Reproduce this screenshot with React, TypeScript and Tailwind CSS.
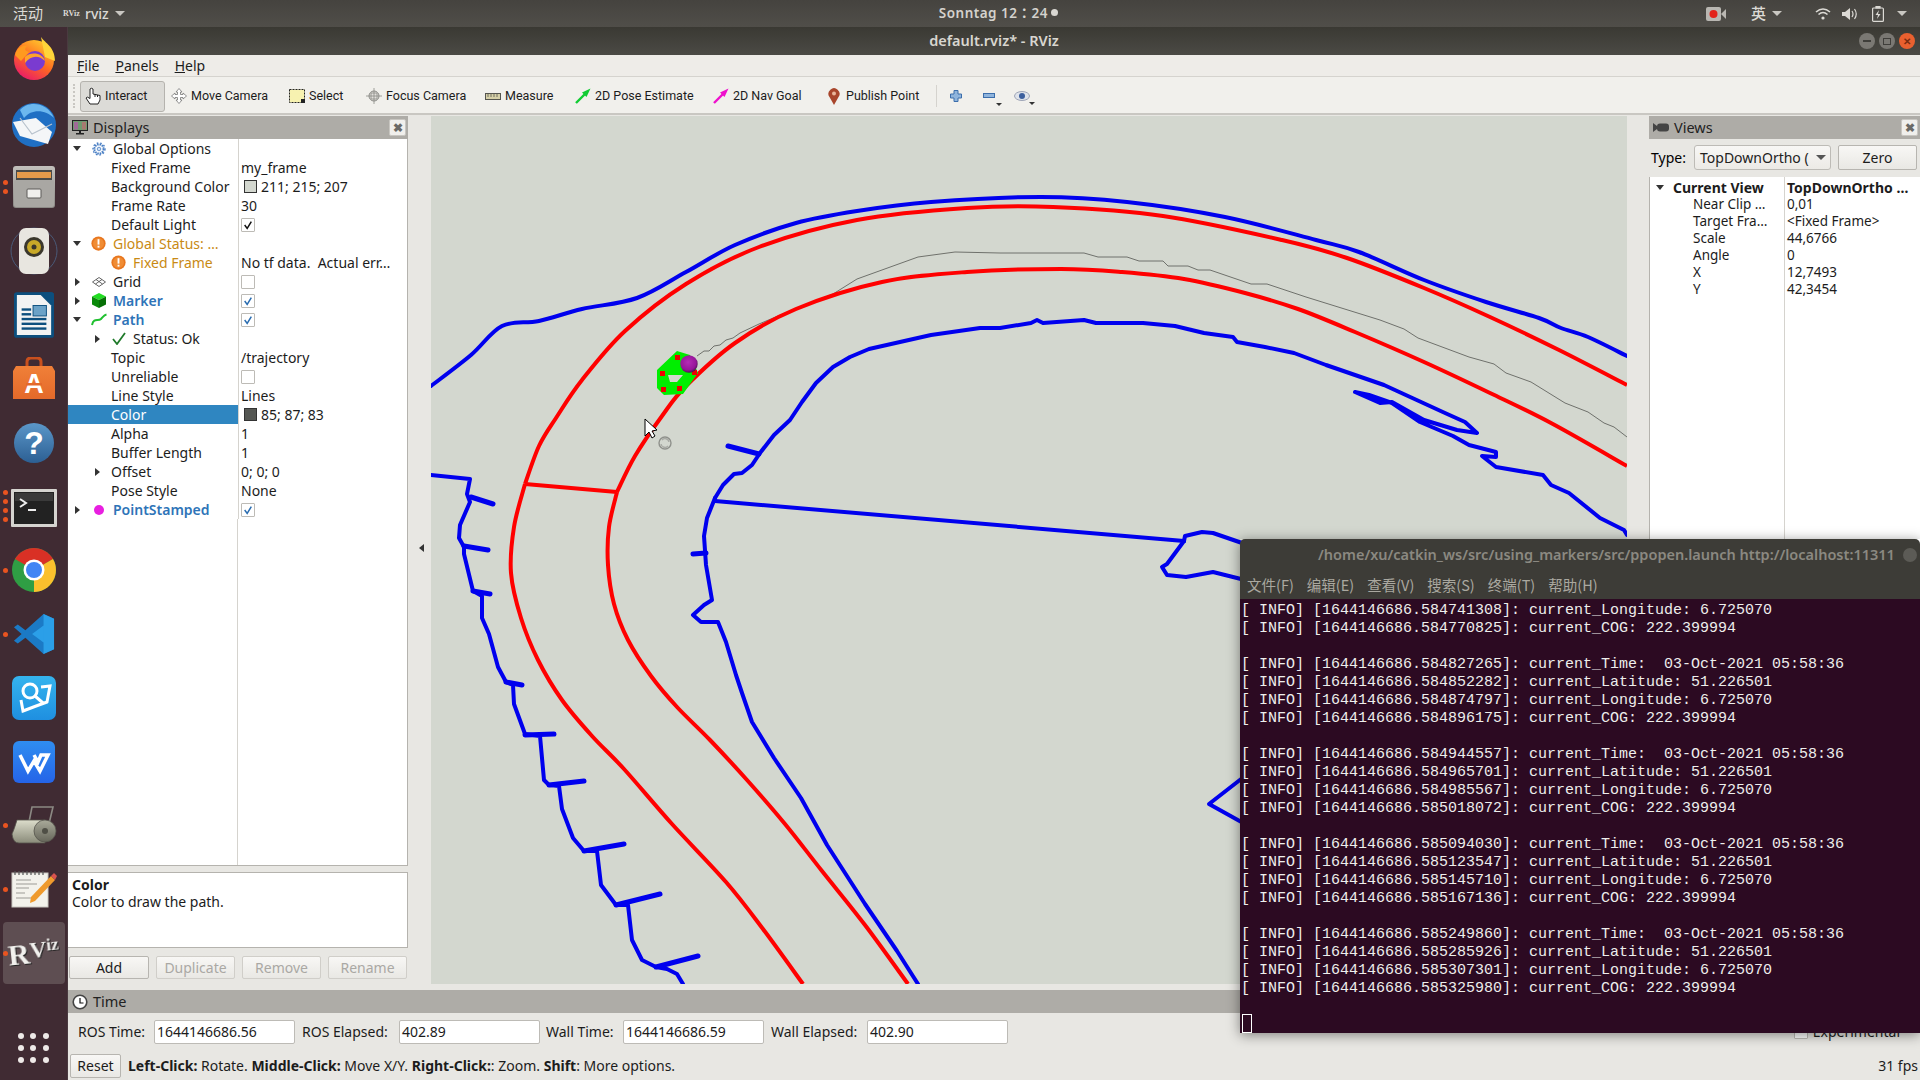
import type { ReactNode } from 'react';

const BLUE = '#0000ee';
const RED = '#ff0000';

type Pt = [number, number];

// catmull-rom to bezier, keeps the long lane curves from looking faceted
function smooth(pts: Pt[]) {
  let d = `M${pts[0][0]} ${pts[0][1]}`;
  for (let i = 0; i < pts.length - 1; i++) {
    const p0 = pts[Math.max(i - 1, 0)];
    const p1 = pts[i];
    const p2 = pts[i + 1];
    const p3 = pts[Math.min(i + 2, pts.length - 1)];
    const c1x = p1[0] + (p2[0] - p0[0]) / 6;
    const c1y = p1[1] + (p2[1] - p0[1]) / 6;
    const c2x = p2[0] - (p3[0] - p1[0]) / 6;
    const c2y = p2[1] - (p3[1] - p1[1]) / 6;
    d += ` C${c1x} ${c1y} ${c2x} ${c2y} ${p2[0]} ${p2[1]}`;
  }
  return d;
}

const redOuter: Pt[] = [[525, 484], [539, 446], [556, 418], [582, 380], [625, 331], [686, 284], [759, 247], [857, 220], [967, 208], [1053, 207], [1163, 216], [1282, 240], [1347, 258], [1424, 288], [1490, 317], [1559, 350], [1627, 385]];
const redOuterDown: Pt[] = [[525, 484], [514, 527], [511, 573], [521, 618], [538, 660], [562, 700], [592, 736], [624, 769], [672, 824], [726, 882], [763, 929], [803, 984]];
const redInner: Pt[] = [[617, 492], [635, 456], [662, 416], [686, 386], [735, 343], [796, 309], [882, 282], [967, 272], [1061, 269], [1122, 272], [1184, 279], [1245, 293], [1298, 309], [1355, 332], [1424, 362], [1490, 393], [1551, 423], [1627, 466]];
const redInnerDown: Pt[] = [[617, 492], [609, 527], [608, 565], [614, 604], [628, 640], [651, 676], [677, 707], [710, 740], [747, 780], [785, 824], [822, 871], [865, 925], [908, 984]];
const blueOuter: Pt[] = [[431, 386], [471, 355], [502, 326], [539, 321], [582, 309], [637, 298], [686, 272], [735, 245], [796, 223], [857, 211], [931, 202], [1041, 197], [1127, 202], [1225, 217], [1316, 240], [1359, 252], [1424, 280], [1486, 302], [1539, 318], [1561, 328], [1588, 337], [1627, 356]];
const blueInner = '715,498 723,485 734,474 742,473 752,465 760,453 774,435 790,420 802,402 816,383 833,367 850,357 869,349 900,342 931,335 980,328 1000,328 1031,323 1037,320 1043,323 1084,320 1096,323 1143,323 1175,326 1204,333 1233,337 1237,342 1265,347 1294,353 1326,365 1384,385 1445,413 1465,422 1477,433 1457,430 1424,420 1392,402 1380,403 1355,392 1369,395 1392,403 1420,422 1453,436 1469,445 1496,452 1496,457 1482,456 1496,467 1543,475 1551,485 1569,493 1600,518 1624,530 1627,535';
const blueDown = '715,498 707,518 704,536 706,565 712,600 704,605 693,615 701,622 718,622 726,642 736,675 742,693 752,722 774,758 801,798 827,845 865,904 897,951 918,984';
const blueLeft = '431,475 470,479 467,494 470,502 460,525 459,538 464,547 464,554 473,591 482,596 482,618 489,634 498,667 506,682 513,685 514,704 525,734 540,736 544,780 549,785 559,786 562,809 573,838 584,851 597,851 601,885 616,905 628,905 632,940 642,960 656,967 667,969 677,974 683,984';
const spurs: [number, number, number, number][] = [[471, 497, 493, 504], [464, 546, 488, 550], [473, 591, 490, 594], [506, 682, 522, 685], [525, 735, 554, 734], [549, 785, 584, 781], [584, 851, 624, 844], [616, 905, 660, 894], [656, 967, 698, 956], [728, 446, 759, 454], [693, 554, 706, 553]];
const trajectory = '697,356 704,351 709,351 714,346 720,345 726,340 733,338 740,333 759,324 797,308 833,294 857,279 918,257 955,252 1000,253 1084,253 1098,257 1127,257 1139,261 1163,261 1168,266 1188,266 1198,270 1210,270 1251,284 1267,284 1306,297 1380,320 1404,329 1418,338 1469,357 1494,364 1506,373 1531,382 1565,403 1588,412 1604,423 1614,427 1627,437';

function MapView() {
  return (
    <svg viewBox="431 116 1196 868" className="w-full h-full block">
      <polyline points={trajectory} fill="none" stroke="#6f716c" strokeWidth="1" />
      <g fill="none" stroke={RED} strokeWidth="4" strokeLinejoin="round">
        <path d={smooth(redOuter)} />
        <path d={smooth(redOuterDown)} />
        <path d={smooth(redInner)} />
        <path d={smooth(redInnerDown)} />
        <path d="M525 484 L617 492" />
      </g>
      <g fill="none" stroke={BLUE} strokeWidth="4" strokeLinejoin="round" strokeLinecap="round">
        <path d={smooth(blueOuter)} />
        <polyline points={blueInner} />
        <polyline points={blueDown} />
        <polyline points={blueLeft} />
        <path d="M715 501 L1184 541" />
        <polyline points="1184,541 1185,536 1202,532 1213,533 1245,544" />
        <polyline points="1184,541 1167,564 1162,567 1167,575 1186,577 1213,572 1245,580" />
        <polyline points="1245,776 1209,804 1245,824" />
        {spurs.map((s, i) => (
          <line key={i} x1={s[0]} y1={s[1]} x2={s[2]} y2={s[3]} strokeWidth="5" />
        ))}
      </g>
      <path fill="#00ee00" fillRule="evenodd" d="M677 351 L657 370 L657 388 L664 395 L683 394 L698 373 L690 355 Z M668 375 L683 375 L677 382 L670 382 Z" />
      <g fill="#ee0000">
        <rect x="675" y="355" width="5" height="5" />
        <rect x="660" y="371" width="5" height="5" />
        <rect x="661" y="387" width="5" height="5" />
        <rect x="677" y="386" width="5" height="5" />
        <rect x="692" y="370" width="5" height="5" />
      </g>
      <defs>
        <radialGradient id="ball" cx="0.45" cy="0.4" r="0.6">
          <stop offset="0" stopColor="#b52cb5" />
          <stop offset="0.75" stopColor="#96169a" />
          <stop offset="1" stopColor="#4e164f" />
        </radialGradient>
      </defs>
      <circle cx="689" cy="364" r="8.7" fill="url(#ball)" />
      <path d="M645 419 L645 436 L649 432 L652 438 L655 436 L652 431 L657 430 Z" fill="#fff" stroke="#000" strokeWidth="1" />
      <g fill="none" stroke="#8f918c" strokeWidth="1.4">
        <circle cx="665" cy="443" r="6" />
        <path d="M662 440 A4 4 0 0 1 669 442 M668 446 A4 4 0 0 1 661 444" stroke="#a8aaa5" />
      </g>
    </svg>
  );
}

function Grad({ id, from, to }: { id: string; from: string; to: string }) {
  return (
    <linearGradient id={id} x1="0" y1="0" x2="0" y2="1">
      <stop offset="0" stopColor={from} />
      <stop offset="1" stopColor={to} />
    </linearGradient>
  );
}

const dockIcons: { dots: number; icon: ReactNode; active?: boolean }[] = [
  {
    dots: 0,
    icon: (
      <svg viewBox="0 0 46 46" className="w-[46px] h-[46px] -mt-[4px]">
        <defs>
          <linearGradient id="ff" x1="0.8" y1="0" x2="0.2" y2="1">
            <stop offset="0" stopColor="#ffcf2f" />
            <stop offset="0.5" stopColor="#ff6b1f" />
            <stop offset="1" stopColor="#e8146f" />
          </linearGradient>
        </defs>
        <circle cx="23" cy="25" r="20" fill="url(#ff)" />
        <path d="M30 2 C34 8 44 12 44 26 L34 22 Z" fill="#ffd53a" />
        <path d="M4 20 C6 12 12 10 16 11 C13 14 14 16 18 17 L10 26 Z" fill="#ff9a1f" />
        <circle cx="24" cy="26" r="10" fill="#7a3bd0" />
        <path d="M14 22 C20 16 32 18 34 26 C28 20 20 20 14 28 Z" fill="#ffa32a" />
      </svg>
    ),
  },
  {
    dots: 0,
    icon: (
      <svg viewBox="0 0 48 48" className="w-[48px] h-[48px]">
        <circle cx="24" cy="25" r="22" fill="#1f6fc4" />
        <path d="M10 10 C18 0 38 2 44 18 C36 10 22 8 14 18 Z" fill="#6cb7ee" />
        <path d="M3 22 L26 18 L42 32 L38 44 L10 36 Z" fill="#f4f6f8" />
        <path d="M10 18 L22 34 L42 24" fill="none" stroke="#b8c2cc" strokeWidth="1.2" />
      </svg>
    ),
  },
  {
    dots: 2,
    icon: (
      <svg viewBox="0 0 44 44" className="w-[44px] h-[44px]">
        <defs><Grad id="cab" from="#c2c0bc" to="#8b8985" /></defs>
        <rect x="1" y="1" width="42" height="42" rx="3" fill="url(#cab)" />
        <rect x="4" y="5" width="36" height="10" fill="#4a4a48" />
        <rect x="5" y="7" width="34" height="6" fill="#e59a4a" />
        <rect x="2" y="15" width="40" height="27" rx="2" fill="#a9a7a3" />
        <rect x="15" y="24" width="14" height="9" rx="1" fill="#f0efec" stroke="#5c5b58" />
      </svg>
    ),
  },
  {
    dots: 0,
    icon: (
      <svg viewBox="0 0 48 48" className="w-[48px] h-[48px]">
        <circle cx="24" cy="24" r="23" fill="none" stroke="#4a5a78" strokeWidth="1" />
        <rect x="9" y="1" width="30" height="46" rx="7" fill="#e8e6e0" />
        <circle cx="24" cy="20" r="10" fill="#3a372c" />
        <circle cx="24" cy="20" r="7" fill="#c8a928" />
        <circle cx="24" cy="20" r="2.5" fill="#3a372c" />
      </svg>
    ),
  },
  {
    dots: 0,
    icon: (
      <svg viewBox="0 0 42 48" className="w-[40px] h-[46px]">
        <rect x="0" y="0" width="42" height="48" rx="3" fill="#0c4f7e" />
        <path d="M3 3 L28 3 L39 14 L39 45 L3 45 Z" fill="#f2f3f3" />
        <path d="M28 0 L39 0 Q42 0 42 3 L42 14 Z" fill="#0c4f7e" />
        <rect x="8" y="17" width="10" height="2.5" fill="#0c4f7e" />
        <rect x="8" y="22" width="10" height="2.5" fill="#0c4f7e" />
        <rect x="8" y="27" width="26" height="2.5" fill="#0c4f7e" />
        <rect x="8" y="32" width="26" height="2.5" fill="#0c4f7e" />
        <rect x="8" y="37" width="26" height="2.5" fill="#0c4f7e" />
        <rect x="20" y="14" width="14" height="11" fill="#6ba2c7" stroke="#0c4f7e" />
      </svg>
    ),
  },
  {
    dots: 0,
    icon: (
      <svg viewBox="0 0 42 44" className="w-[42px] h-[44px]">
        <defs><Grad id="bag" from="#f08038" to="#e4692a" /></defs>
        <path d="M14 10 V5 Q14 1 18 1 H24 Q28 1 28 5 V10" fill="none" stroke="#c8501e" strokeWidth="3" />
        <path d="M3 9 H39 L42 14 V42 H0 V14 Z" fill="url(#bag)" />
        <text x="21" y="36" textAnchor="middle" fontSize="27" fontWeight="700" fill="#fff" fontFamily="Liberation Sans, sans-serif">A</text>
        <rect x="13" y="26" width="16" height="2.5" fill="#e4692a" />
      </svg>
    ),
  },
  {
    dots: 0,
    icon: (
      <svg viewBox="0 0 40 40" className="w-[40px] h-[40px]">
        <defs><Grad id="hlp" from="#5b97c9" to="#2c5f93" /></defs>
        <circle cx="20" cy="20" r="20" fill="url(#hlp)" />
        <text x="20" y="31" textAnchor="middle" fontSize="32" fontWeight="700" fill="#fff" fontFamily="Liberation Sans, sans-serif">?</text>
      </svg>
    ),
  },
  {
    dots: 4,
    icon: (
      <svg viewBox="0 0 46 38" className="w-[46px] h-[38px] mt-[4px]">
        <rect width="46" height="38" rx="1" fill="#d5d4d0" />
        <rect x="3" y="3" width="40" height="32" fill="#222" />
        <rect x="4" y="4" width="38" height="8" fill="#3a3a3a" />
        <path d="M9 10 L15 14 L9 18" fill="none" stroke="#eee" strokeWidth="2" />
        <rect x="17" y="20" width="8" height="2" fill="#eee" />
      </svg>
    ),
  },
  {
    dots: 1,
    icon: (
      <svg viewBox="0 0 44 44" className="w-[44px] h-[44px]">
        <circle cx="22" cy="22" r="22" fill="#2f9e44" />
        <path d="M22 22 L3 11 A22 22 0 0 1 41 11 Z" fill="#d93025" />
        <path d="M22 22 L41 11 A22 22 0 0 1 22 44 Z" fill="#fbc02d" />
        <circle cx="22" cy="22" r="10.5" fill="#fff" />
        <circle cx="22" cy="22" r="8" fill="#4285f4" />
      </svg>
    ),
  },
  {
    dots: 1,
    icon: (
      <svg viewBox="0 0 44 44" className="w-[42px] h-[42px]">
        <path d="M32 1 L43 6 V38 L32 43 L13 26 L5 32 L1 29 L9 22 L1 15 L5 12 L13 18 Z" fill="#1b7ac6" />
        <path d="M32 1 L43 6 V38 L32 43 Z M32 13 L20 22 L32 31 Z" fill="#2b9fe8" fillRule="evenodd" />
      </svg>
    ),
  },
  {
    dots: 0,
    icon: (
      <svg viewBox="0 0 44 44" className="w-[44px] h-[44px]">
        <defs><Grad id="sq" from="#35b4ee" to="#1f8fe0" /></defs>
        <rect width="44" height="44" rx="7" fill="url(#sq)" />
        <circle cx="18" cy="15" r="7" fill="none" stroke="#fff" strokeWidth="3" />
        <path d="M23 20 L31 27 M29 11 L38 10 L35 26 Q24 30 11 35 L9 24" fill="none" stroke="#fff" strokeWidth="3" />
      </svg>
    ),
  },
  {
    dots: 0,
    icon: (
      <svg viewBox="0 0 42 42" className="w-[42px] h-[42px]">
        <defs><Grad id="wp" from="#2f8df0" to="#2564e8" /></defs>
        <rect width="42" height="42" rx="6" fill="url(#wp)" />
        <path d="M7 14 L15 30 L21 20 L27 30 L35 14 H28 L25 21 L21 14" fill="none" stroke="#fff" strokeWidth="3.5" />
      </svg>
    ),
  },
  {
    dots: 1,
    icon: (
      <svg viewBox="0 0 46 38" className="w-[46px] h-[38px]">
        <defs>
          <Grad id="rol" from="#dcddcb" to="#8a8b7a" />
          <Grad id="rolEnd" from="#a9aa9a" to="#66665a" />
        </defs>
        <path d="M18 16 L21 1 H42 L36 26" fill="none" stroke="#8b8983" strokeWidth="1.6" />
        <path d="M6 14 Q3 24 1 28 Q2 37 8 37 H34 V14 Z" fill="url(#rol)" stroke="#55544c" strokeWidth="0.8" />
        <circle cx="34" cy="25" r="11" fill="url(#rolEnd)" stroke="#55544c" strokeWidth="0.8" />
        <circle cx="34" cy="25" r="3" fill="#4f4f46" />
      </svg>
    ),
  },
  {
    dots: 1,
    icon: (
      <svg viewBox="0 0 46 38" className="w-[46px] h-[38px]">
        <rect x="1" y="3" width="36" height="34" fill="#f3f2ec" stroke="#c9c8c2" />
        <path d="M4 1 V5 M8 1 V5 M12 1 V5 M16 1 V5 M20 1 V5 M24 1 V5 M28 1 V5 M32 1 V5" stroke="#555" strokeWidth="1.2" />
        <path d="M5 10 H20 M5 14 H26 M5 18 H18 M5 23 H14 M5 28 H20" stroke="#9c9b96" strokeWidth="1" />
        <path d="M20 27 L40 6 L44 10 L24 31 L19 33 Z" fill="#ef9a2d" />
        <path d="M40 6 L43 3 L46 6 L44 10 Z" fill="#d9534f" />
      </svg>
    ),
  },
  {
    dots: 1,
    active: true,
    icon: (
      <div className="flex items-start -rotate-[6deg] font-['Liberation_Serif',serif] font-bold text-[#f2f1ee] leading-none">
        <span className="text-[30px] drop-shadow-[1px_1px_0_#222]">R</span>
        <span className="text-[24px] drop-shadow-[1px_1px_0_#222]">V</span>
        <span className="text-[17px] drop-shadow-[1px_1px_0_#222]">iz</span>
      </div>
    ),
  },
];

function Dock() {
  return (
    <div className="w-[68px] shrink-0 bg-[#402b33] flex flex-col pt-px border-r border-[#4a3a40]">
      {dockIcons.map((d, i) => (
        <div key={i} className="h-[63.8px] shrink-0 flex items-center justify-center relative">
          {d.active && <div className="w-[62px] h-[62px] rounded-[4px] bg-[#5e4e52] flex items-center justify-center">{d.icon}</div>}
          {!d.active && d.icon}
          {d.dots > 0 && (
            <div className="absolute left-[3px] top-0 bottom-0 flex flex-col justify-center gap-[4px]">
              {Array.from({ length: d.dots }).map((_, k) => (
                <span key={k} className="w-[5px] h-[5px] rounded-full bg-[#e95420]" />
              ))}
            </div>
          )}
        </div>
      ))}
      <div className="mt-auto mb-[17px] grid grid-cols-3 w-[31px] mx-auto gap-[6px]">
        {Array.from({ length: 9 }).map((_, i) => (
          <span key={i} className="w-[6px] h-[6px] rounded-full bg-[#eeeae8]" />
        ))}
      </div>
    </div>
  );
}

function TopBar() {
  return (
    <div className="h-[27px] shrink-0 bg-gradient-to-b from-[#45433f] to-[#504e49] flex items-center text-[#dcdad5] text-[14px] font-['Noto_Sans','Noto_Sans_CJK_SC',sans-serif]">
      <span className="ml-[13px] w-[50px] text-[15px]">活动</span>
      <span className="text-[8px] font-bold w-[22px] font-['Liberation_Serif',serif]">RViz</span>
      <span className="font-medium">rviz</span>
      <Tri className="ml-[6px] border-t-[#c9c7c2]" wide />
      <div className="ml-[814px] flex items-center font-semibold tracking-[0.5px] text-[13.5px] text-[#d4d2cd] font-['Noto_Sans','Noto_Sans_CJK_TC',sans-serif]">
        Sonntag 12：24
        <span className="w-[7px] h-[7px] rounded-full bg-[#d9d7d2] ml-[3px] -mt-[3px]" />
      </div>
      <svg viewBox="0 0 20 14" className="w-[20px] h-[14px] ml-[648px]">
        <rect width="15" height="14" rx="2" fill="#b9b7b2" />
        <path d="M15 7 L20 2 V12 Z" fill="#b9b7b2" />
        <circle cx="7.5" cy="7" r="4" fill="#e2231a" />
      </svg>
      <span className="ml-[25px] text-[15px] font-medium">英</span>
      <Tri className="ml-[6px] border-t-[#c9c7c2]" wide />
      <svg viewBox="0 0 16 14" className="w-[16px] h-[14px] ml-[33px]" fill="none" stroke="#dcdad5" strokeWidth="1.6">
        <path d="M1 5 Q8 -1 15 5 M3.5 7.5 Q8 3.5 12.5 7.5" />
        <circle cx="8" cy="11" r="1.6" fill="#dcdad5" stroke="none" />
      </svg>
      <svg viewBox="0 0 16 14" className="w-[16px] h-[14px] ml-[11px]" fill="#dcdad5">
        <path d="M0 5 H3 L8 1 V13 L3 9 H0 Z" />
        <path d="M10 4 Q12 7 10 10 M12.5 2 Q16 7 12.5 12" fill="none" stroke="#dcdad5" strokeWidth="1.2" />
      </svg>
      <svg viewBox="0 0 12 16" className="w-[12px] h-[16px] ml-[14px]" fill="none" stroke="#dcdad5" strokeWidth="1.2">
        <rect x="0.6" y="2" width="10.8" height="13.4" rx="1" />
        <rect x="4" y="0" width="4" height="2" fill="#dcdad5" />
        <path d="M7 4 L3.5 9 H6 L5 13 L8.5 8 H6 Z" fill="#dcdad5" stroke="none" />
      </svg>
      <Tri className="ml-[13px] border-t-[#c9c7c2]" wide />
    </div>
  );
}

function Tri({ className, wide }: { className?: string; wide?: boolean }) {
  return (
    <span
      className={`inline-block w-0 h-0 border-l-transparent border-r-transparent border-solid ${wide ? 'border-l-[5px] border-r-[5px] border-t-[5px]' : 'border-l-[4px] border-r-[4px] border-t-[4px]'} ${className ?? ''}`}
    />
  );
}

function CloseBtn() {
  return (
    <div className="w-[17px] h-[17px] bg-[#f0efec] border border-[#c8c6c1] rounded-[2px] flex items-center justify-center text-[12px] leading-none font-bold text-[#6a6966]">
      ✖
    </div>
  );
}

function Arrow({ open }: { open?: boolean }) {
  if (open) return <span className="w-0 h-0 border-x-[4.5px] border-x-transparent border-t-[5px] border-t-[#333]" />;
  return <span className="w-0 h-0 ml-[2px] border-y-[4.5px] border-y-transparent border-l-[5px] border-l-[#333]" />;
}

function Check({ on, blue }: { on?: boolean; blue?: boolean }) {
  return (
    <span className={`w-[14px] h-[14px] border border-[#bdbbb6] bg-white rounded-[1px] flex items-center justify-center ${blue ? 'text-[#2a6cb0]' : 'text-[#111]'}`}>
      {on && (
        <svg viewBox="0 0 12 12" className="w-[10px] h-[10px]" fill="none" stroke="currentColor" strokeWidth="1.8">
          <path d="M2 6 L5 10 L10 2" />
        </svg>
      )}
    </span>
  );
}

function Warn({ size = 15 }: { size?: number }) {
  return (
    <svg viewBox="0 0 16 16" width={size} height={size}>
      <circle cx="8" cy="8" r="7.6" fill="#e8761e" />
      <circle cx="8" cy="8" r="5.8" fill="#f08c34" />
      <rect x="7" y="3.4" width="2" height="5.8" fill="#fff" />
      <rect x="7" y="10.4" width="2" height="2" fill="#fff" />
    </svg>
  );
}

const gearIcon = (
  <svg viewBox="0 0 14 14" className="w-[14px] h-[14px]" fill="none" stroke="#4a7fc4">
    <circle cx="7" cy="7" r="4.6" strokeWidth="2" strokeDasharray="1.6 0.8" />
    <circle cx="7" cy="7" r="6" strokeWidth="1.4" strokeDasharray="1.6 2" />
    <circle cx="7" cy="7" r="1.8" fill="#cfe0f3" strokeWidth="0.8" />
  </svg>
);
const gridIcon = (
  <svg viewBox="0 0 14 10" className="w-[14px] h-[10px]" fill="none" stroke="#555" strokeWidth="0.9">
    <path d="M7 0.5 L13.5 5 L7 9.5 L0.5 5 Z M4 2.5 L10.5 7 M10 2.5 L3.5 7" />
  </svg>
);
const cubeIcon = (
  <svg viewBox="0 0 14 15" className="w-[14px] h-[15px]">
    <path d="M7 0 L14 3.5 L7 7 L0 3.5 Z" fill="#22dd22" />
    <path d="M0 3.5 L7 7 V15 L0 11.5 Z" fill="#0a8a0a" />
    <path d="M14 3.5 L7 7 V15 L14 11.5 Z" fill="#077007" />
  </svg>
);
const pathIcon = (
  <svg viewBox="0 0 16 13" className="w-[16px] h-[13px]" fill="none" stroke="#20c030" strokeWidth="2">
    <path d="M1 12 C3 4 7 9 10 6 C12 4 13 2 15.500 1.500" />
  </svg>
);
const okIcon = (
  <svg viewBox="0 0 14 13" className="w-[14px] h-[13px]" fill="none" stroke="#1f7a2a" strokeWidth="1.8">
    <path d="M1 7 L5 12 L13 1" />
  </svg>
);
const dotIcon = <span className="w-[10px] h-[10px] rounded-full bg-[#e81fe0] mx-[2px]" />;

type RowDef = {
  text: number;
  arrow?: { x: number; open?: boolean };
  icon?: { x: number; node: ReactNode };
  label: string;
  tone?: 'blue' | 'warn';
  value?: ReactNode;
  selected?: boolean;
};

function Swatch({ color }: { color: string }) {
  return <span className="w-[13px] h-[13px] border border-[#333] mr-[4px] ml-[3px]" style={{ background: color }} />;
}

const displayRows: RowDef[] = [
  { text: 45, arrow: { x: 5, open: true }, icon: { x: 24, node: gearIcon }, label: 'Global Options' },
  { text: 43, label: 'Fixed Frame', value: 'my_frame' },
  { text: 43, label: 'Background Color', value: <><Swatch color="#d3d7cf" />211; 215; 207</> },
  { text: 43, label: 'Frame Rate', value: '30' },
  { text: 43, label: 'Default Light', value: <Check on /> },
  { text: 45, arrow: { x: 5, open: true }, icon: { x: 23, node: <Warn /> }, label: 'Global Status: …', tone: 'warn' },
  { text: 65, icon: { x: 43, node: <Warn /> }, label: 'Fixed Frame', tone: 'warn', value: 'No tf data.  Actual err…' },
  { text: 45, arrow: { x: 5 }, icon: { x: 24, node: gridIcon }, label: 'Grid', value: <Check /> },
  { text: 45, arrow: { x: 5 }, icon: { x: 24, node: cubeIcon }, label: 'Marker', tone: 'blue', value: <Check on blue /> },
  { text: 45, arrow: { x: 5, open: true }, icon: { x: 23, node: pathIcon }, label: 'Path', tone: 'blue', value: <Check on blue /> },
  { text: 65, arrow: { x: 25 }, icon: { x: 44, node: okIcon }, label: 'Status: Ok' },
  { text: 43, label: 'Topic', value: '/trajectory' },
  { text: 43, label: 'Unreliable', value: <Check /> },
  { text: 43, label: 'Line Style', value: 'Lines' },
  { text: 43, label: 'Color', selected: true, value: <><Swatch color="#555753" />85; 87; 83</> },
  { text: 43, label: 'Alpha', value: '1' },
  { text: 43, label: 'Buffer Length', value: '1' },
  { text: 43, arrow: { x: 25 }, label: 'Offset', value: '0; 0; 0' },
  { text: 43, label: 'Pose Style', value: 'None' },
  { text: 45, arrow: { x: 5 }, icon: { x: 24, node: dotIcon }, label: 'PointStamped', tone: 'blue', value: <Check on blue /> },
];

function TreeRow({ row }: { row: RowDef }) {
  const tone = row.selected ? 'text-white' : row.tone === 'blue' ? 'text-[#2e74b8] font-semibold' : row.tone === 'warn' ? 'text-[#c98a14]' : 'text-[#1c1c1c]';
  return (
    <div className="flex h-[19px] items-center">
      <div className={`w-[170px] h-full shrink-0 relative flex items-center whitespace-nowrap ${row.selected ? 'bg-[#2f86c1]' : ''} ${tone}`} style={{ paddingLeft: row.text }}>
        {row.arrow && (
          <span className="absolute top-0 bottom-0 flex items-center" style={{ left: row.arrow.x }}>
            <Arrow open={row.arrow.open} />
          </span>
        )}
        {row.icon && (
          <span className="absolute top-0 bottom-0 flex items-center" style={{ left: row.icon.x }}>
            {row.icon.node}
          </span>
        )}
        {row.label}
      </div>
      <div className="flex-1 h-full border-l border-[#d5d3ce] pl-[2px] flex items-center whitespace-pre text-[#1c1c1c]">{row.value}</div>
    </div>
  );
}

function PanelHeader({ icon, title, close }: { icon: ReactNode; title: string; close?: boolean }) {
  return (
    <div className="h-[23px] shrink-0 bg-[#aeaca7] flex items-center pl-[3px] pr-[2px] text-[#222]">
      <span className="w-[17px] flex justify-center">{icon}</span>
      <span className="ml-[5px] text-[14.500px]">{title}</span>
      {close && <span className="ml-auto"><CloseBtn /></span>}
    </div>
  );
}

function QtButton({ label, disabled, className }: { label: string; disabled?: boolean; className?: string }) {
  return (
    <button className={`h-[23px] rounded-[2px] border bg-gradient-to-b from-[#f8f7f5] to-[#e9e8e4] ${disabled ? 'border-[#d0cec9] text-[#aaa8a4]' : 'border-[#b7b5b0] text-[#1c1c1c]'} ${className ?? ''}`}>
      {label}
    </button>
  );
}

function DisplaysPanel() {
  return (
    <div className="w-[340px] shrink-0 flex flex-col">
      <PanelHeader
        title="Displays"
        close
        icon={
          <svg viewBox="0 0 16 15" className="w-[16px] h-[15px]">
            <rect x="0.500" y="0.500" width="15" height="10" fill="#6f9a6f" stroke="#222" />
            <rect x="2" y="2" width="4" height="7.500" fill="#a06a98" />
            <rect x="10" y="2" width="4" height="7.500" fill="#a87a70" />
            <path d="M7 11 H9 V13 H12 V14.500 H4 V13 H7 Z" fill="#222" />
          </svg>
        }
      />
      <div className="h-[727px] shrink-0 bg-white border-r border-b border-[#b5b3ae]">
        {displayRows.map((r, i) => (
          <TreeRow key={i} row={r} />
        ))}
        <div className="h-[346px] w-[170px] border-r border-[#d5d3ce]" />
      </div>
      <div className="h-[6px] shrink-0" />
      <div className="h-[76px] shrink-0 bg-white border-y border-r border-[#b5b3ae] pl-[4px] pt-[3px] leading-[17px] text-[#1c1c1c]">
        <div className="font-bold">Color</div>
        <div>Color to draw the path.</div>
      </div>
      <div className="mt-[8px] flex gap-[7px] pl-px">
        <QtButton label="Add" className="w-[80px]" />
        <QtButton label="Duplicate" disabled className="w-[79px]" />
        <QtButton label="Remove" disabled className="w-[79px]" />
        <QtButton label="Rename" disabled className="w-[79px]" />
      </div>
    </div>
  );
}

const viewRows: [string, string][] = [
  ['Near Clip …', '0,01'],
  ['Target Fra…', '<Fixed Frame>'],
  ['Scale', '44,6766'],
  ['Angle', '0'],
  ['X', '12,7493'],
  ['Y', '42,3454'],
];

function ViewsPanel() {
  return (
    <div className="w-[271px] shrink-0 flex flex-col">
      <PanelHeader
        title="Views"
        close
        icon={
          <svg viewBox="0 0 16 9" className="w-[16px] h-[9px]" fill="#444">
            <path d="M0 0 L4 3 V6 L0 9 Z" />
            <rect x="4" y="0.500" width="12" height="8" rx="3" />
          </svg>
        }
      />
      <div className="flex items-center h-[38px] pb-[2px] pl-[2px]">
        <span className="w-[43px]">Type:</span>
        <div className="w-[137px] h-[25px] border border-[#bdbbb6] rounded-[3px] bg-gradient-to-b from-[#f8f7f5] to-[#eceae6] flex items-center pl-[5px]">
          <span className="w-[110px] whitespace-nowrap text-[#222]">TopDownOrtho (</span>
          <Tri className="ml-[6px] border-t-[#555]" wide />
        </div>
        <QtButton label="Zero" className="w-[79px] ml-[7px] !h-[25px]" />
      </div>
      <div className="flex-1 bg-white border-l border-[#b5b3ae] text-[13.500px] text-[#1c1c1c] relative">
        <div className="flex h-[17px] items-center mt-[2px] font-bold whitespace-nowrap text-[14px]">
          <span className="ml-[6px] w-[14px] flex"><Arrow open /></span>
          <span className="w-[112px] ml-[3px]">Current View</span>
          <span className="ml-[2px]">TopDownOrtho …</span>
        </div>
        {viewRows.map(([k, v]) => (
          <div key={k} className="flex h-[17px] items-center whitespace-nowrap">
            <span className="ml-[43px] w-[92px]">{k}</span>
            <span className="ml-[2px]">{v}</span>
          </div>
        ))}
        <div className="absolute top-0 bottom-0 left-[134px] border-l border-[#d5d3ce]" />
      </div>
    </div>
  );
}

const toolItems: { label: string; w: number; icon: ReactNode }[] = [
  {
    label: 'Move Camera',
    w: 118,
    icon: (
      <svg viewBox="0 0 16 16" className="w-[16px] h-[16px]" fill="#fff" stroke="#777" strokeWidth="0.8">
        <path d="M8 0.500 L11 4 H9.500 V6.500 H12 V5 L15.500 8 L12 11 V9.500 H9.500 V12 H11 L8 15.500 L5 12 H6.500 V9.500 H4 V11 L0.500 8 L4 5 V6.500 H6.500 V4 H5 Z" />
      </svg>
    ),
  },
  {
    label: 'Select',
    w: 77,
    icon: (
      <svg viewBox="0 0 16 14" className="w-[16px] h-[14px]">
        <rect x="0.500" y="0.500" width="15" height="13" fill="#f7f2b0" stroke="#222" strokeDasharray="2 1" />
        <rect x="12" y="10" width="4" height="4" fill="#222" />
      </svg>
    ),
  },
  {
    label: 'Focus Camera',
    w: 119,
    icon: (
      <svg viewBox="0 0 16 16" className="w-[16px] h-[16px]" fill="none" stroke="#8a8a86">
        <circle cx="8" cy="8" r="5" fill="#e2e0dc" />
        <path d="M8 0 V16 M0 8 H16 M5 5 H11 M5 11 H11 M5 5 V11 M11 5 V11" strokeWidth="0.8" />
      </svg>
    ),
  },
  {
    label: 'Measure',
    w: 90,
    icon: (
      <svg viewBox="0 0 16 7" className="w-[16px] h-[7px]">
        <rect x="0.500" y="0.500" width="15" height="6" fill="#d6d0a8" stroke="#55554f" />
        <path d="M3 1 V4 M6 1 V4 M9 1 V4 M12 1 V4" stroke="#55554f" strokeWidth="0.8" />
      </svg>
    ),
  },
  {
    label: '2D Pose Estimate',
    w: 138,
    icon: (
      <svg viewBox="0 0 16 16" className="w-[16px] h-[16px]">
        <path d="M1 15 L10 6" stroke="#11cc33" strokeWidth="2.4" />
        <path d="M15.500 0.500 L7 4.500 L11.500 9 Z" fill="#11cc33" />
      </svg>
    ),
  },
  {
    label: '2D Nav Goal',
    w: 113,
    icon: (
      <svg viewBox="0 0 16 16" className="w-[16px] h-[16px]">
        <path d="M1 15 L10 6" stroke="#ee11cc" strokeWidth="2.4" />
        <path d="M15.500 0.500 L7 4.500 L11.500 9 Z" fill="#ee11cc" />
      </svg>
    ),
  },
  {
    label: 'Publish Point',
    w: 110,
    icon: (
      <svg viewBox="0 0 12 17" className="w-[12px] h-[17px]">
        <path d="M6 17 L1.500 9 A5.500 5.500 0 1 1 10.500 9 Z" fill="#a8452b" />
        <circle cx="6" cy="5.500" r="2" fill="#e9b59a" />
      </svg>
    ),
  },
];

function Toolbar() {
  return (
    <div className="h-[38px] shrink-0 bg-[#f1f0ec] border-b-2 border-[#c9c7c2] flex items-center pl-[5px] pt-[2px] text-[12.500px] text-[#1c1c1c] whitespace-nowrap font-['Roboto',sans-serif]">
      <span className="w-[3px] h-[24px] border-l-2 border-dotted border-[#c9c7c2]" />
      <div className="ml-[4px] mr-[6px] w-[85px] h-[31px] border border-[#b5b3ae] rounded-[3px] bg-[#dcdbd7] flex items-center pl-[4px] gap-[4px]">
        <svg viewBox="0 0 16 18" className="w-[16px] h-[18px]" fill="#fff" stroke="#222" strokeWidth="1">
          <path d="M5 9 V2 Q6.500 0.500 8 2 V7 L15 8.500 V13 L13 17 H5 L1 11 Q2 9 5 11.500 Z" />
          <path d="M10 7 V10 M12.500 8 V10" />
        </svg>
        Interact
      </div>
      {toolItems.map(t => (
        <div key={t.label} className="flex items-center gap-[4px] shrink-0" style={{ width: t.w }}>
          <span className="w-[16px] flex justify-center">{t.icon}</span>
          {t.label}
        </div>
      ))}
      <span className="w-px h-[22px] bg-[#d5d3ce]" />
      <svg viewBox="0 0 12 12" className="ml-[13px] w-[12px] h-[12px]">
        <path d="M4 0.500 H8 V4 H11.500 V8 H8 V11.500 H4 V8 H0.500 V4 H4 Z" fill="#8fb4dc" stroke="#3c6eab" />
      </svg>
      <div className="ml-[21px] relative w-[12px] h-[6px]">
        <div className="w-[12px] h-[5px] bg-[#8fb4dc] border border-[#3c6eab]" />
        <Tri className="absolute left-[13px] top-[10px] border-t-[#333] !border-x-[3px] !border-t-[3px]" />
      </div>
      <div className="ml-[19px] relative">
        <svg viewBox="0 0 16 10" className="w-[16px] h-[10px] block">
          <ellipse cx="8" cy="5" rx="7.500" ry="4.500" fill="#dfe3ea" stroke="#8a92a8" strokeWidth="0.8" />
          <circle cx="8" cy="5" r="3" fill="#3c5f9e" />
        </svg>
        <Tri className="absolute left-[15px] top-[11px] border-t-[#333] !border-x-[3px] !border-t-[3px]" />
      </div>
    </div>
  );
}

function TimeRow() {
  const input = 'w-[141px] h-[24px] bg-white border border-[#bdbbb6] rounded-[2px] pl-[2px] flex items-center text-[#1c1c1c] shrink-0';
  return (
    <div className="h-[38px] shrink-0 flex items-center pl-[10px] pb-[1px] text-[#1c1c1c] whitespace-nowrap">
      <span className="w-[76px]">ROS Time:</span>
      <span className={input}>1644146686.56</span>
      <span className="w-[104px] pl-[7px]">ROS Elapsed:</span>
      <span className={input}>402.89</span>
      <span className="w-[83px] pl-[6px]">Wall Time:</span>
      <span className={input}>1644146686.59</span>
      <span className="w-[103px] pl-[7px]">Wall Elapsed:</span>
      <span className={input}>402.90</span>
      <span className="ml-auto mr-[20px] flex items-center gap-[5px]">
        <Check />
        Experimental
      </span>
    </div>
  );
}

function Terminal() {
  const groups = [
    ['584741308', '584770825'],
    ['584827265', '584852282', '584874797', '584896175'],
    ['584944557', '584965701', '584985567', '585018072'],
    ['585094030', '585123547', '585145710', '585167136'],
    ['585249860', '585285926', '585307301', '585325980'],
  ];
  const labels = ['current_Time:  03-Oct-2021 05:58:36', 'current_Latitude: 51.226501', 'current_Longitude: 6.725070', 'current_COG: 222.399994'];
  return (
    <div className="absolute left-[1240px] top-[539px] w-[680px] h-[494px] flex flex-col shadow-[0_2px_12px_rgba(0,0,0,0.45)]">
      <div className="h-[32px] shrink-0 bg-[#3d3c37] rounded-t-[5px] flex items-center pl-[78px] text-[14.500px] font-semibold text-[#8b8981] whitespace-nowrap font-['Noto_Sans',sans-serif]">
        /home/xu/catkin_ws/src/using_markers/src/ppopen.launch http://localhost:11311
        <span className="ml-[8px] w-[14px] h-[14px] rounded-full bg-[#5c5b56]" />
      </div>
      <div className="h-[28px] shrink-0 bg-[#3d3c37] flex items-center gap-[13px] pl-[7px] text-[14.500px] text-[#aaa8a0] font-['Noto_Sans_CJK_SC',sans-serif]">
        <span>文件(F)</span>
        <span>编辑(E)</span>
        <span>查看(V)</span>
        <span>搜索(S)</span>
        <span>终端(T)</span>
        <span>帮助(H)</span>
      </div>
      <div className="flex-1 bg-[#2c0a22] pl-px pt-[3px] text-[15px] leading-[18px] text-[#eeeeec] font-['Liberation_Mono',monospace] whitespace-pre">
        {groups.map((g, gi) => (
          <div key={gi} className="mb-[18px]">
            {g.map((n, i) => (
              <div key={n}>{`[ INFO] [1644146686.${n}]: ${g.length === 2 ? labels[i + 2] : labels[i]}`}</div>
            ))}
          </div>
        ))}
        <div className="w-[10px] h-[19px] border border-white -mt-[2px] ml-px" />
      </div>
    </div>
  );
}

export default function App() {
  return (
    <div className="relative w-[1920px] h-[1080px] overflow-hidden flex flex-col bg-[#e8e7e3] text-[14px] font-['Noto_Sans',sans-serif]">
      <TopBar />
      <div className="flex-1 flex min-h-0">
        <Dock />
        <div className="flex-1 flex flex-col min-w-0">
          <div className="h-[28px] shrink-0 bg-gradient-to-b from-[#3a3933] to-[#4b4a45] flex items-center justify-center relative text-[14.500px] font-semibold text-[#d8d6d0]">
            default.rviz* - RViz
            <div className="absolute right-[5px] top-[6px] flex gap-[4px]">
              <span className="w-[16px] h-[16px] rounded-full bg-[#7a7873] flex items-center justify-center"><span className="w-[8px] h-[2px] bg-[#3f3e3a]" /></span>
              <span className="w-[16px] h-[16px] rounded-full bg-[#7a7873] flex items-center justify-center"><span className="w-[8px] h-[7px] border border-[#3f3e3a]" /></span>
              <span className="w-[16px] h-[16px] rounded-full bg-[#e9602f] flex items-center justify-center text-[10px] leading-none text-[#7a2c10]">✕</span>
            </div>
          </div>
          <div className="h-[22px] shrink-0 bg-[#eeece8] border-b border-[#d5d3ce] flex items-center pl-[9px] gap-[16px] text-[#1c1c1c]">
            <span><span className="underline">F</span>ile</span>
            <span><span className="underline">P</span>anels</span>
            <span><span className="underline">H</span>elp</span>
          </div>
          <Toolbar />
          <div className="h-[869px] shrink-0 flex pt-px">
            <DisplaysPanel />
            <div className="w-[23px] shrink-0 flex items-center justify-end pr-[7px] pb-[4px]">
              <span className="w-0 h-0 border-y-[4px] border-y-transparent border-r-[5px] border-r-[#333]" />
            </div>
            <div className="w-[1196px] shrink-0 bg-[#d3d7cf]">
              <MapView />
            </div>
            <div className="w-[22px] shrink-0" />
            <ViewsPanel />
          </div>
          <div className="h-[6px] shrink-0" />
          <PanelHeader
            title="Time"
            icon={
              <svg viewBox="0 0 16 16" className="w-[16px] h-[16px]" fill="#fff" stroke="#444" strokeWidth="1.600">
                <circle cx="8" cy="8" r="6.800" />
                <path d="M8 4 V9 H11.500" fill="none" stroke="#111" strokeWidth="1.200" />
              </svg>
            }
          />
          <TimeRow />
          <div className="flex-1 flex items-center pl-[2px] pr-[2px] text-[#1c1c1c] whitespace-nowrap">
            <button className="w-[51px] h-[24px] border border-[#b7b5b0] rounded-[2px] bg-gradient-to-b from-[#f8f7f5] to-[#e9e8e4]">Reset</button>
            <span className="ml-[7px]">
              <b>Left-Click:</b> Rotate. <b>Middle-Click:</b> Move X/Y. <b>Right-Click:</b>: Zoom. <b>Shift</b>: More options.
            </span>
            <span className="ml-auto">31 fps</span>
          </div>
        </div>
      </div>
      <Terminal />
    </div>
  );
}
